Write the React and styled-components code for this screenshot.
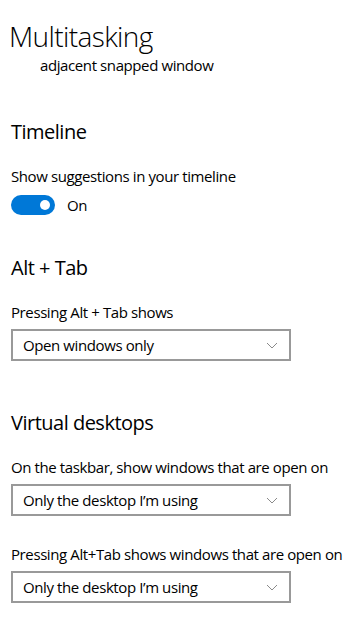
import React from 'react';
import styled, { createGlobalStyle } from 'styled-components';

const GlobalStyle = createGlobalStyle`
    body {
        margin: 0;
        background: #ffffff;
        color: #000000;
        font-family: "Open Sans", "Noto Sans", sans-serif;
    }
`

function Chevron()
{
    return (
        <svg width="12" height="7" viewBox="0 0 12 7">
            <path d="M1 1 L6 6 L11 1" fill="none" stroke="#8a8a8a" strokeWidth="1" />
        </svg>
    )
}

function Select(props)
{
    let { value, $top } = props;
    return (
        <SelectBox $top={ $top }>
            <span>{ value }</span>
            <Chevron />
        </SelectBox>
    )
}

function App()
{
    return (
        <Page>
            <GlobalStyle />
            <Title>Multitasking</Title>
            <Clipped>adjacent snapped window</Clipped>

            <Section $top={ 43 }>
                <Heading>Timeline</Heading>
                <Label $top={ 20 }>Show suggestions in your timeline</Label>
                <ToggleRow>
                    <Track>
                        <Knob />
                    </Track>
                    <span>On</span>
                </ToggleRow>
            </Section>

            <Section $top={ 39 }>
                <Heading>Alt + Tab</Heading>
                <Label $top={ 20 }>Pressing Alt + Tab shows</Label>
                <Select $top={ 7 } value="Open windows only" />
            </Section>

            <Section $top={ 48 }>
                <Heading>Virtual desktops</Heading>
                <Label $top={ 20 }>On the taskbar, show windows that are open on</Label>
                <Select $top={ 7 } value="Only the desktop I’m using" />
                <Label $top={ 28 }>Pressing Alt+Tab shows windows that are open on</Label>
                <Select $top={ 7 } value="Only the desktop I’m using" />
            </Section>
        </Page>
    )
}

export default App;

const Page = styled.div`
    display: flex;
    flex-direction: column;
    align-items: flex-start;
    padding: 18px 0 0 11px;
    width: 359px;
    height: 626px;
    box-sizing: border-box;
    overflow: hidden;
    white-space: nowrap;
`

const Title = styled.h1`
    margin: 0 0 0 -2px;
    font-size: 28px;
    line-height: 36px;
    font-weight: 300;
    letter-spacing: -0.6px;
`

const Clipped = styled.div`
    margin: 1px 0 0 29px;
    font-size: 15px;
    line-height: 20px;
    letter-spacing: -0.4px;
`

const Section = styled.section`
    display: flex;
    flex-direction: column;
    align-items: flex-start;
    margin-top: ${ p => p.$top }px;
`

const Heading = styled.h2`
    margin: 0;
    font-size: 20px;
    line-height: 28px;
    font-weight: 400;
    letter-spacing: -0.5px;
`

const Label = styled.div`
    margin-top: ${ p => p.$top }px;
    font-size: 15px;
    line-height: 20px;
    letter-spacing: -0.4px;
`

const ToggleRow = styled.div`
    display: flex;
    align-items: center;
    gap: 12px;
    margin-top: 9px;
    font-size: 15px;
    line-height: 20px;
    letter-spacing: -0.4px;
`

const Track = styled.div`
    display: flex;
    align-items: center;
    justify-content: flex-end;
    width: 44px;
    height: 20px;
    padding: 0 5px;
    box-sizing: border-box;
    border-radius: 10px;
    background: #0078d7;
`

const Knob = styled.div`
    width: 10px;
    height: 10px;
    border-radius: 50%;
    background: #ffffff;
`

const SelectBox = styled.div`
    display: flex;
    align-items: center;
    justify-content: space-between;
    margin-top: ${ p => p.$top }px;
    width: 280px;
    height: 32px;
    padding: 0 11px 0 10px;
    box-sizing: border-box;
    border: 2px solid #999999;
    font-size: 15px;
    line-height: 28px;
    letter-spacing: -0.4px;
`
